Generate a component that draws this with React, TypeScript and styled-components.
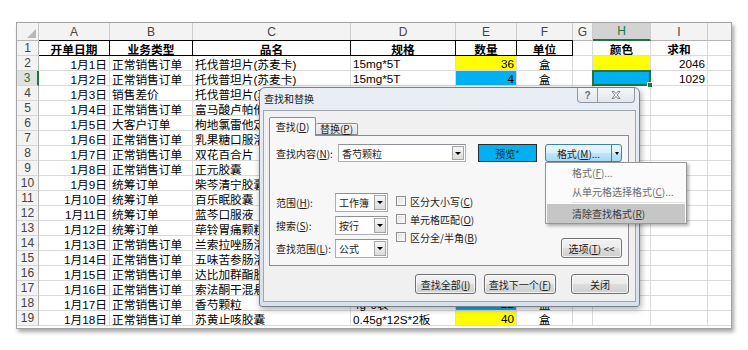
import React from "react";
import styled, { createGlobalStyle } from "styled-components";

const YELLOW = "#ffff00";
const BLUE = "#00b0f0";
const GREEN = "#217346";

const GlobalStyle = createGlobalStyle`
  html, body {
    margin: 0;
    padding: 0;
    background: #ffffff;
  }
  body {
    font-family: "Liberation Sans", "Noto Sans CJK SC", sans-serif;
  }
`;

const Page = styled.div`
  position: relative;
  width: 748px;
  height: 350px;
  padding: 22px 0 0 16px;
  box-sizing: border-box;
  overflow: hidden;
`;

const Sheet = styled.div`
  width: 716px;
  height: 307px;
  box-sizing: border-box;
  border: 1px solid #a3a3a3;
  background: #ffffff;
  box-shadow: 2px 3px 4px rgba(0, 0, 0, 0.35);
  overflow: hidden;
`;

const Grid = styled.div`
  display: grid;
  grid-template-columns: 22px 71px 83px 158px 105px 61px 56px 20px 58px 57px 30px;
  grid-template-rows: 18px repeat(19, 15px);
  font-size: 11.7px;
  color: #000;
`;

const Corner = styled.div`
  position: relative;
  background: #f3f3f3;
  border-right: 1px solid #c9c9c9;
  border-bottom: 1px solid #b5b5b5;

  &::after {
    content: "";
    position: absolute;
    right: 2px;
    bottom: 2px;
    border-left: 9px solid transparent;
    border-bottom: 9px solid #b9b9b9;
  }
`;

const ColHead = styled.div<{ $active?: boolean }>`
  box-sizing: border-box;
  display: flex;
  align-items: center;
  justify-content: center;
  background: ${(p) => (p.$active ? "#d3d3d3" : "#f3f3f3")};
  border-right: 1px solid #cdcdcd;
  border-bottom: ${(p) => (p.$active ? `2px solid ${GREEN}` : "1px solid #b5b5b5")};
  color: ${(p) => (p.$active ? GREEN : "#444")};
  font-size: 12px;
`;

const RowHead = styled.div<{ $active?: boolean }>`
  box-sizing: border-box;
  display: flex;
  align-items: center;
  justify-content: center;
  background: ${(p) => (p.$active ? "#e1e1e1" : "#f3f3f3")};
  border-right: ${(p) => (p.$active ? `2px solid ${GREEN}` : "1px solid #b5b5b5")};
  border-bottom: 1px solid #d6d6d6;
  color: ${(p) => (p.$active ? GREEN : "#444")};
  font-size: 12px;
`;

const justify = { left: "flex-start", center: "center", right: "flex-end" };

const Cell = styled.div<{
  $align?: "left" | "center" | "right";
  $fill?: string;
  $bold?: boolean;
  $boxed?: boolean;
  $selected?: boolean;
}>`
  position: relative;
  box-sizing: border-box;
  display: flex;
  align-items: center;
  justify-content: ${(p) => justify[p.$align || "left"]};
  padding: 0 2px;
  white-space: nowrap;
  overflow: visible;
  background: ${(p) => p.$fill || "#ffffff"};
  font-weight: ${(p) => (p.$bold ? 700 : 400)};
  border-right: 1px solid ${(p) => (p.$boxed ? "#000" : "#dadada")};
  border-bottom: 1px solid ${(p) => (p.$boxed ? "#000" : "#dadada")};
  ${(p) => (p.$boxed ? "box-shadow: 0 -1px 0 #000;" : "")}

  ${(p) =>
    p.$selected
      ? `
    &::before {
      content: "";
      position: absolute;
      left: -1px;
      top: -1px;
      right: -1px;
      bottom: -1px;
      border: 2px solid ${GREEN};
    }
    &::after {
      content: "";
      position: absolute;
      right: -3px;
      bottom: -3px;
      width: 4px;
      height: 4px;
      background: ${GREEN};
      border: 1px solid #fff;
      z-index: 1;
    }
  `
      : ""}
`;

interface RowData {
  date: string;
  kind: string;
  name: string;
  spec?: string;
  qty?: string;
  qtyFill?: string;
  unit?: string;
  color?: string;
  total?: string;
}

// rows 4-17: columns D-F sit under the dialog, so they are left blank
const rows: RowData[] = [
  { date: "1月1日", kind: "正常销售订单", name: "托伐普坦片(苏麦卡)", spec: "15mg*5T", qty: "36", qtyFill: YELLOW, unit: "盒", color: YELLOW, total: "2046" },
  { date: "1月2日", kind: "正常销售订单", name: "托伐普坦片(苏麦卡)", spec: "15mg*5T", qty: "4", qtyFill: BLUE, unit: "盒", color: BLUE, total: "1029" },
  { date: "1月3日", kind: "销售差价", name: "托伐普坦片(苏麦卡)" },
  { date: "1月4日", kind: "正常销售订单", name: "富马酸卢帕他定片" },
  { date: "1月5日", kind: "大客户订单", name: "枸地氯雷他定片" },
  { date: "1月6日", kind: "正常销售订单", name: "乳果糖口服溶液" },
  { date: "1月7日", kind: "正常销售订单", name: "双花百合片" },
  { date: "1月8日", kind: "正常销售订单", name: "正元胶囊" },
  { date: "1月9日", kind: "统筹订单", name: "柴芩清宁胶囊" },
  { date: "1月10日", kind: "统筹订单", name: "百乐眠胶囊" },
  { date: "1月11日", kind: "统筹订单", name: "蓝芩口服液" },
  { date: "1月12日", kind: "统筹订单", name: "荜铃胃痛颗粒" },
  { date: "1月13日", kind: "正常销售订单", name: "兰索拉唑肠溶片" },
  { date: "1月14日", kind: "正常销售订单", name: "五味苦参肠溶胶囊" },
  { date: "1月15日", kind: "正常销售订单", name: "达比加群酯胶囊" },
  { date: "1月16日", kind: "正常销售订单", name: "索法酮干混悬剂" },
  { date: "1月17日", kind: "正常销售订单", name: "香芍颗粒", spec: "4g*9袋", qty: "22", qtyFill: BLUE, unit: "盒" },
  { date: "1月18日", kind: "正常销售订单", name: "苏黄止咳胶囊", spec: "0.45g*12S*2板", qty: "40", qtyFill: YELLOW, unit: "盒" },
];

const COLS = ["A", "B", "C", "D", "E", "F", "G", "H", "I", ""];
const HEADINGS = ["开单日期", "业务类型", "品名", "规格", "数量", "单位", "", "颜色", "求和", ""];

/* ---------- dialog ---------- */

const Dialog = styled.div`
  position: absolute;
  left: 259px;
  top: 87px;
  width: 381px;
  height: 220px;
  box-sizing: border-box;
  padding: 0 3px 4px 3px;
  border: 1px solid #77818d;
  border-radius: 6px 6px 3px 3px;
  background: linear-gradient(180deg, #eaeff5 0%, #dfe6ee 45%, #d8e0ea 100%);
  box-shadow: 1px 2px 6px rgba(0, 0, 0, 0.35);
  display: flex;
  flex-direction: column;
  font-family: "Noto Sans CJK SC", "Liberation Sans", sans-serif;
  font-size: 10px;
  color: #1b1b1b;
`;

const TitleBar = styled.div`
  height: 22px;
  display: flex;
  align-items: flex-start;
  justify-content: space-between;
`;

const Title = styled.span`
  line-height: 21px;
  padding-left: 1px;
`;

const Caption = styled.div`
  display: flex;
  margin-right: 1px;
`;

const CaptionButton = styled.div<{ $w: number; $side: "left" | "right" }>`
  width: ${(p) => p.$w}px;
  height: 15px;
  box-sizing: border-box;
  border: 1px solid #8f99a5;
  border-top: none;
  ${(p) => (p.$side === "right" ? "border-left: none;" : "")}
  border-radius: ${(p) => (p.$side === "left" ? "0 0 0 4px" : "0 0 4px 0")};
  background: linear-gradient(180deg, #f5f7f9, #e1e6ec);
  display: flex;
  align-items: center;
  justify-content: center;
  color: #6b6b6b;
  font-family: "Liberation Sans", sans-serif;
  font-weight: 700;
  font-size: 10px;
`;

const Client = styled.div`
  flex: 1;
  box-sizing: border-box;
  border: 1px solid #9ea6b0;
  background: #f0f0f0;
  padding: 6px 6px 0 5px;
  display: flex;
  flex-direction: column;
`;

const TabStrip = styled.div`
  height: 18px;
  display: flex;
  align-items: flex-end;
`;

const Tab = styled.div<{ $active?: boolean }>`
  position: relative;
  z-index: ${(p) => (p.$active ? 1 : 0)};
  box-sizing: border-box;
  width: ${(p) => (p.$active ? 47 : 42)}px;
  height: ${(p) => (p.$active ? 19 : 12)}px;
  margin-bottom: ${(p) => (p.$active ? -1 : 0)}px;
  border: 1px solid #898c95;
  ${(p) => (p.$active ? "border-bottom: none;" : "border-left: none;")}
  border-radius: 2px 2px 0 0;
  background: ${(p) => (p.$active ? "#f7f7f7" : "linear-gradient(180deg, #f3f3f3, #e2e2e2)")};
  display: flex;
  align-items: center;
  justify-content: center;
  line-height: 1;
`;

const Panel = styled.div`
  box-sizing: border-box;
  border: 1px solid #898c95;
  background: #f7f7f7;
  padding: 8px 5px 7px 6px;
  display: flex;
  flex-direction: column;
`;

const FindRow = styled.div`
  display: flex;
  align-items: center;
  height: 18px;
`;

const Label = styled.span<{ $w: number }>`
  width: ${(p) => p.$w}px;
  flex: none;
  white-space: nowrap;
`;

const Combo = styled.div<{ $w: number; $h: number }>`
  width: ${(p) => p.$w}px;
  height: ${(p) => p.$h}px;
  box-sizing: border-box;
  border: 1px solid #abadb3;
  border-top-color: #8e9196;
  background: #ffffff;
  display: flex;
  align-items: stretch;
`;

const ComboText = styled.span`
  flex: 1;
  padding-left: 3px;
  display: flex;
  align-items: center;
`;

const ComboArrow = styled.span`
  width: 12px;
  margin: 1px;
  box-sizing: border-box;
  border: 1px solid #a5a5a5;
  background: linear-gradient(180deg, #f6f6f6, #dcdcdc);
  display: flex;
  align-items: center;
  justify-content: center;

  &::after {
    content: "";
    border-left: 3px solid transparent;
    border-right: 3px solid transparent;
    border-top: 3px solid #000;
  }
`;

const Preview = styled.div`
  width: 59px;
  height: 18px;
  margin-left: 12px;
  box-sizing: border-box;
  border: 1px solid #2a2a2a;
  background: ${BLUE};
  display: flex;
  align-items: center;
  justify-content: center;
  color: #1a1a1a;
`;

const SplitWrap = styled.div`
  position: relative;
  margin-left: 8px;
`;

const Split = styled.div`
  width: 77px;
  height: 18px;
  box-sizing: border-box;
  display: flex;
  border: 1px solid #3c7fb1;
  border-radius: 3px;
  background: linear-gradient(180deg, #eaf6fd 0%, #d9f0fc 50%, #bee6fd 51%, #a7d9f5 100%);
`;

const SplitMain = styled.span`
  flex: 1;
  display: flex;
  align-items: center;
  justify-content: center;
  border-right: 1px solid #3c7fb1;
`;

const SplitArrow = styled.span`
  width: 9px;
  display: flex;
  align-items: center;
  justify-content: center;

  &::after {
    content: "";
    border-left: 2.5px solid transparent;
    border-right: 2.5px solid transparent;
    border-top: 3px solid #000;
  }
`;

const Menu = styled.div`
  position: absolute;
  left: 0;
  top: 100%;
  z-index: 5;
  width: 142px;
  box-sizing: border-box;
  padding: 0 1px;
  border: 1px solid #979797;
  background: #fbfbfb;
  box-shadow: 2px 2px 3px rgba(0, 0, 0, 0.3);
`;

const MenuItem = styled.div<{ $hot?: boolean }>`
  height: 19px;
  padding-left: 25px;
  display: flex;
  align-items: center;
  white-space: nowrap;
  background: ${(p) => (p.$hot ? "#c6c6c6" : "transparent")};
  color: ${(p) => (p.$hot ? "#3a3a3a" : "#6d6d6d")};
`;

const MenuSep = styled.div`
  height: 1px;
  margin: 1px 0 1px 25px;
  background: #e2e2e2;
`;

const Options = styled.div`
  display: flex;
  margin-top: 31px;
`;

const FieldGrid = styled.div`
  display: grid;
  grid-template-columns: 59px 53px;
  grid-auto-rows: 19px;
  row-gap: 4px;
  align-items: center;
`;

const Checks = styled.div`
  display: flex;
  flex-direction: column;
  margin-left: 8px;
  margin-top: -1px;
`;

const CheckRow = styled.label`
  height: 18px;
  display: flex;
  align-items: center;
  gap: 4px;
  white-space: nowrap;
`;

const Box = styled.span`
  width: 10px;
  height: 10px;
  box-sizing: border-box;
  border: 1px solid #8f8f8f;
  background: linear-gradient(135deg, #dcdcdc, #ffffff);
  box-shadow: inset 0 0 0 1px #f4f4f4;
`;

const Button = styled.div<{ $w: number }>`
  width: ${(p) => p.$w}px;
  height: 20px;
  box-sizing: border-box;
  border: 1px solid #707070;
  border-radius: 3px;
  background: linear-gradient(180deg, #f2f2f2 0%, #ebebeb 50%, #dddddd 51%, #cfcfcf 100%);
  box-shadow: inset 0 0 0 1px rgba(255, 255, 255, 0.75);
  display: flex;
  align-items: center;
  justify-content: center;
  white-space: nowrap;
`;

const OptionsButton = styled(Button)`
  margin-left: auto;
  margin-right: 1px;
  align-self: flex-end;
`;

const Footer = styled.div`
  display: flex;
  justify-content: flex-end;
  margin-top: 8px;
  gap: 8px;
`;

const CloseButton = styled(Button)`
  margin-left: 7px;
`;

const CloseGlyph = () => (
  <svg width="10" height="8" viewBox="0 0 10 8">
    <path
      d="M1 0.5h2.2L5 2.6 6.8 0.5H9L6.2 4 9 7.5H6.8L5 5.4 3.2 7.5H1L3.8 4z"
      fill="#fafafa"
      stroke="#6a6a6a"
      strokeWidth="0.8"
      strokeLinejoin="round"
    />
  </svg>
);

const FindDialog: React.FC = () => (
  <Dialog>
    <TitleBar>
      <Title>查找和替换</Title>
      <Caption>
        <CaptionButton $w={21} $side="left">?</CaptionButton>
        <CaptionButton $w={37} $side="right">
          <CloseGlyph />
        </CaptionButton>
      </Caption>
    </TitleBar>
    <Client>
      <TabStrip>
        <Tab $active>
          <span>
            查找(<u>D</u>)
          </span>
        </Tab>
        <Tab>
          <span>
            替换(<u>P</u>)
          </span>
        </Tab>
      </TabStrip>
      <Panel>
        <FindRow>
          <Label $w={62}>
            查找内容(<u>N</u>):
          </Label>
          <Combo $w={128} $h={18}>
            <ComboText>香芍颗粒</ComboText>
            <ComboArrow />
          </Combo>
          <Preview>预览*</Preview>
          <SplitWrap>
            <Split>
              <SplitMain>
                <span>
                  格式(<u>M</u>)...
                </span>
              </SplitMain>
              <SplitArrow />
            </Split>
            <Menu>
              <MenuItem>
                <span>
                  格式(<u>F</u>)...
                </span>
              </MenuItem>
              <MenuItem>
                <span>
                  从单元格选择格式(<u>C</u>)...
                </span>
              </MenuItem>
              <MenuSep />
              <MenuItem $hot>
                <span>
                  清除查找格式(<u>R</u>)
                </span>
              </MenuItem>
            </Menu>
          </SplitWrap>
        </FindRow>
        <Options>
          <FieldGrid>
            <Label $w={59}>
              范围(<u>H</u>):
            </Label>
            <Combo $w={53} $h={19}>
              <ComboText>工作簿</ComboText>
              <ComboArrow />
            </Combo>
            <Label $w={59}>
              搜索(<u>S</u>):
            </Label>
            <Combo $w={53} $h={19}>
              <ComboText>按行</ComboText>
              <ComboArrow />
            </Combo>
            <Label $w={59}>
              查找范围(<u>L</u>):
            </Label>
            <Combo $w={53} $h={19}>
              <ComboText>公式</ComboText>
              <ComboArrow />
            </Combo>
          </FieldGrid>
          <Checks>
            <CheckRow>
              <Box />
              <span>
                区分大小写(<u>C</u>)
              </span>
            </CheckRow>
            <CheckRow>
              <Box />
              <span>
                单元格匹配(<u>O</u>)
              </span>
            </CheckRow>
            <CheckRow>
              <Box />
              <span>
                区分全/半角(<u>B</u>)
              </span>
            </CheckRow>
          </Checks>
          <OptionsButton $w={61}>
            <span>
              选项(<u>T</u>)&nbsp;&lt;&lt;
            </span>
          </OptionsButton>
        </Options>
      </Panel>
      <Footer>
        <Button $w={61}>
          <span>
            查找全部(<u>I</u>)
          </span>
        </Button>
        <Button $w={72}>
          <span>
            查找下一个(<u>F</u>)
          </span>
        </Button>
        <CloseButton $w={58}>关闭</CloseButton>
      </Footer>
    </Client>
  </Dialog>
);

export default function App() {
  return (
    <>
      <GlobalStyle />
      <Page>
        <Sheet>
          <Grid>
            <Corner />
            {COLS.map((c, i) => (
              <ColHead key={i} $active={c === "H"}>
                {c}
              </ColHead>
            ))}
            <RowHead>1</RowHead>
            {HEADINGS.map((h, i) => (
              <Cell key={i} $align="center" $bold $boxed={i < 6}>
                {h}
              </Cell>
            ))}
            {rows.map((r, i) => {
              const n = i + 2;
              return (
                <React.Fragment key={n}>
                  <RowHead $active={n === 3}>{n}</RowHead>
                  <Cell $align="right">{r.date}</Cell>
                  <Cell>{r.kind}</Cell>
                  <Cell>{r.name}</Cell>
                  <Cell>{r.spec}</Cell>
                  <Cell $align="right" $fill={r.qtyFill}>
                    {r.qty}
                  </Cell>
                  <Cell $align="center">{r.unit}</Cell>
                  <Cell />
                  <Cell $fill={r.color} $selected={n === 3} />
                  <Cell $align="right">{r.total}</Cell>
                  <Cell />
                </React.Fragment>
              );
            })}
          </Grid>
        </Sheet>
        <FindDialog />
      </Page>
    </>
  );
}
